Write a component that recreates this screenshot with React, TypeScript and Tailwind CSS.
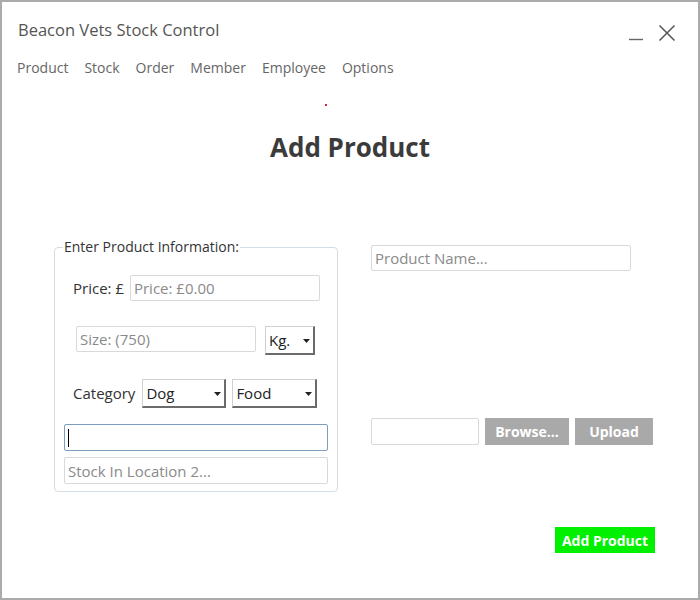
import React from 'react'

const font = { fontFamily: '"Open Sans", "Noto Sans", Arial, sans-serif' }

const MENU = ['Product', 'Stock', 'Order', 'Member', 'Employee', 'Options']

const inputClass =
  'h-[26px] rounded-[2px] border border-[#d9d9d9] bg-white px-[3px] text-[15px] text-[#333] placeholder:text-[#8a8a8a] outline-none'

function Combo({ value, width }: { value: string; width: string }) {
  return (
    <div
      className={`${width} flex h-[29px] items-center justify-between border border-[#d0d0d0] border-r-2 border-b-2 border-r-[#6b6b6b] border-b-[#6b6b6b] bg-white pl-[3px] pr-[3px] text-[15px] text-[#222]`}
    >
      <span>{value}</span>
      <svg width="7" height="4" viewBox="0 0 7 4" className="mt-[1px]">
        <path d="M0 0h7L3.5 4z" fill="#222" />
      </svg>
    </div>
  )
}

function GreyButton({ label, width }: { label: string; width: string }) {
  return (
    <button
      type="button"
      className={`${width} h-[27px] bg-[#a9a9a9] text-[14px] font-bold text-white`}
    >
      {label}
    </button>
  )
}

export default function App() {
  return (
    <div
      style={font}
      className="relative h-[600px] w-[700px] border-2 border-[#ababab] bg-white text-[#444]"
    >
      {/* title bar */}
      <div className="flex items-start justify-between pl-[16px] pr-[22px] pt-[16px]">
        <h1 className="text-[16.5px] leading-[24px] text-[#555]">Beacon Vets Stock Control</h1>
        <div className="flex items-center gap-[14px] pt-[6px]">
          <svg width="16" height="16" viewBox="0 0 16 16">
            <path d="M1 14.5h14" stroke="#666" strokeWidth="1.4" />
          </svg>
          <svg width="18" height="18" viewBox="0 0 18 18">
            <path d="M1.5 1.5l15 15M16.5 1.5l-15 15" stroke="#555" strokeWidth="1.5" />
          </svg>
        </div>
      </div>

      {/* menu */}
      <nav className="mt-[16px] flex gap-[16px] pl-[15px] text-[14px] leading-[20px] text-[#666]">
        {MENU.map((m) => (
          <span key={m}>{m}</span>
        ))}
      </nav>

      <div className="ml-[323px] mt-[26px] h-[2px] w-[2px] bg-[#e0203a]" />

      <h2 className="mt-[23px] text-center text-[26px] font-bold leading-[36px] text-[#3b3b3b]">
        Add Product
      </h2>

      <div className="mt-[73px] flex">
        {/* left: product info */}
        <fieldset className="ml-[52px] h-[254px] w-[284px] rounded-[4px] border border-[#d3dde4] pl-[8px]">
          <legend className="ml-[0px] px-[1px] text-[14px] leading-[18px] text-[#333]">
            Enter Product Information:
          </legend>

          <div className="ml-[10px] mt-[19px] flex items-center gap-[6px]">
            <span className="text-[15px] text-[#333]">Price: £</span>
            <input className={`${inputClass} w-[190px]`} placeholder="Price: £0.00" />
          </div>

          <div className="ml-[13px] mt-[25px] flex items-start gap-[9px]">
            <input className={`${inputClass} w-[180px]`} placeholder="Size: (750)" />
            <Combo value="Kg." width="w-[50px]" />
          </div>

          <div className="ml-[10px] mt-[24px] flex items-center">
            <span className="mr-[7px] text-[15px] text-[#333]">Category</span>
            <Combo value="Dog" width="w-[84px]" />
            <div className="w-[6px]" />
            <Combo value="Food" width="w-[85px]" />
          </div>

          <div className="ml-[1px] mt-[16px] flex h-[27px] w-[264px] items-center rounded-[2px] border border-[#7b9dc2] bg-white pl-[3px]">
            <div className="h-[18px] w-[1px] bg-black" />
          </div>
          <input
            className={`${inputClass} ml-[1px] mt-[6px] h-[27px] w-[264px]`}
            placeholder="Stock In Location 2..."
          />
        </fieldset>

        {/* right: name + image */}
        <div className="ml-[33px] flex flex-col pt-[7px]">
          <input className={`${inputClass} w-[260px]`} placeholder="Product Name..." />
          <div className="mt-[147px] flex gap-[6px]">
            <input className={`${inputClass} h-[27px] w-[108px]`} />
            <GreyButton label="Browse..." width="w-[84px]" />
            <GreyButton label="Upload" width="w-[78px]" />
          </div>
        </div>
      </div>

      <div className="mr-[43px] mt-[35px] flex justify-end">
        <button
          type="button"
          className="h-[26px] w-[100px] bg-[#00f000] text-[14px] font-bold text-white"
        >
          Add Product
        </button>
      </div>
    </div>
  )
}
